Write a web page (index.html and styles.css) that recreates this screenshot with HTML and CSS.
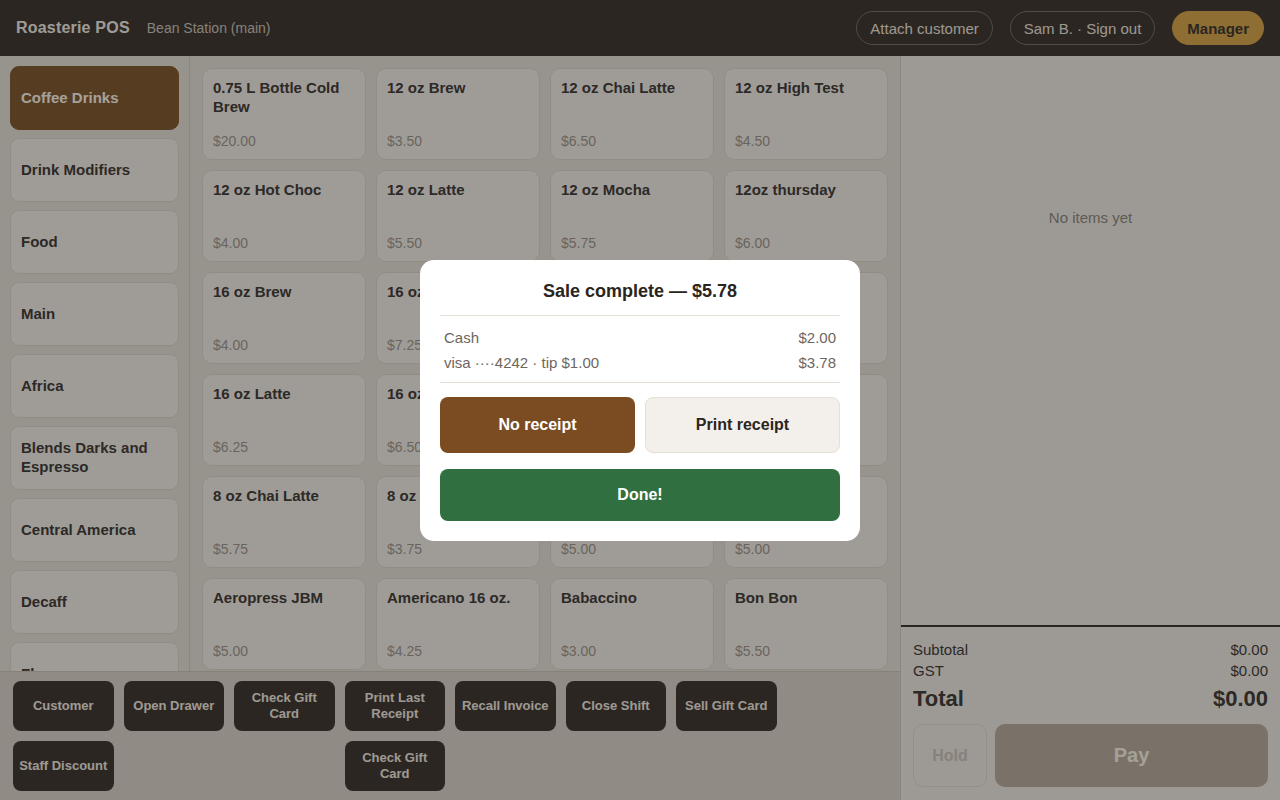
FILE: index.html
```html
<!DOCTYPE html>
<html lang="en">
<head>
<meta charset="utf-8">
<title>Roasterie POS</title>
<link rel="stylesheet" href="styles.css">
</head>
<body>
<div class="app">
  <header class="topbar">
    <div class="brand">
      <span class="brand-name">Roasterie POS</span>
      <span class="store">Bean Station (main)</span>
    </div>
    <div class="top-actions">
      <button class="pill">Attach customer</button>
      <button class="pill">Sam B. · Sign out</button>
      <button class="pill pill-gold">Manager</button>
    </div>
  </header>

  <div class="main">
    <div class="left">
      <div class="catalog">
        <nav class="categories">
          <button class="cat active">Coffee Drinks</button>
          <button class="cat">Drink Modifiers</button>
          <button class="cat">Food</button>
          <button class="cat">Main</button>
          <button class="cat">Africa</button>
          <button class="cat">Blends Darks and Espresso</button>
          <button class="cat">Central America</button>
          <button class="cat">Decaff</button>
          <button class="cat">Flavours</button>
          <button class="cat">Retail</button>
        </nav>
        <div class="products">
          <div class="tile"><span class="name">0.75 L Bottle Cold Brew</span><span class="price">$20.00</span></div>
          <div class="tile"><span class="name">12 oz Brew</span><span class="price">$3.50</span></div>
          <div class="tile"><span class="name">12 oz Chai Latte</span><span class="price">$6.50</span></div>
          <div class="tile"><span class="name">12 oz High Test</span><span class="price">$4.50</span></div>

          <div class="tile"><span class="name">12 oz Hot Choc</span><span class="price">$4.00</span></div>
          <div class="tile"><span class="name">12 oz Latte</span><span class="price">$5.50</span></div>
          <div class="tile"><span class="name">12 oz Mocha</span><span class="price">$5.75</span></div>
          <div class="tile"><span class="name">12oz thursday</span><span class="price">$6.00</span></div>

          <div class="tile"><span class="name">16 oz Brew</span><span class="price">$4.00</span></div>
          <div class="tile"><span class="name">16 oz Chai Latte</span><span class="price">$7.25</span></div>
          <div class="tile"><span class="name">16 oz High Test</span><span class="price">$5.00</span></div>
          <div class="tile"><span class="name">16 oz Hot Choc</span><span class="price">$4.75</span></div>

          <div class="tile"><span class="name">16 oz Latte</span><span class="price">$6.25</span></div>
          <div class="tile"><span class="name">16 oz Mocha</span><span class="price">$6.50</span></div>
          <div class="tile"><span class="name">20 oz Brew</span><span class="price">$4.50</span></div>
          <div class="tile"><span class="name">8 oz Brew</span><span class="price">$3.00</span></div>

          <div class="tile"><span class="name">8 oz Chai Latte</span><span class="price">$5.75</span></div>
          <div class="tile"><span class="name">8 oz Hot Choc</span><span class="price">$3.75</span></div>
          <div class="tile"><span class="name">8 oz Latte</span><span class="price">$5.00</span></div>
          <div class="tile"><span class="name">8 oz Mocha</span><span class="price">$5.00</span></div>

          <div class="tile"><span class="name">Aeropress JBM</span><span class="price">$5.00</span></div>
          <div class="tile"><span class="name">Americano 16 oz.</span><span class="price">$4.25</span></div>
          <div class="tile"><span class="name">Babaccino</span><span class="price">$3.00</span></div>
          <div class="tile"><span class="name">Bon Bon</span><span class="price">$5.50</span></div>
        </div>
      </div>

      <div class="actions">
        <button class="act">Customer</button>
        <button class="act">Open Drawer</button>
        <button class="act">Check Gift Card</button>
        <button class="act">Print Last Receipt</button>
        <button class="act">Recall Invoice</button>
        <button class="act">Close Shift</button>
        <button class="act">Sell Gift Card</button>
        <button class="act row2 col1">Staff Discount</button>
        <button class="act row2 col4">Check Gift Card</button>
      </div>
    </div>

    <aside class="cart">
      <div class="cart-items">
        <p class="empty">No items yet</p>
      </div>
      <div class="summary">
        <div class="sum-row"><span>Subtotal</span><span>$0.00</span></div>
        <div class="sum-row"><span>GST</span><span>$0.00</span></div>
        <div class="sum-row total"><span>Total</span><span>$0.00</span></div>
        <div class="pay-row">
          <button class="hold">Hold</button>
          <button class="pay">Pay</button>
        </div>
      </div>
    </aside>
  </div>
</div>

<div class="overlay">
  <div class="modal">
    <h2 class="modal-title">Sale complete — $5.78</h2>
    <div class="tenders">
      <div class="tender"><span>Cash</span><span>$2.00</span></div>
      <div class="tender"><span>visa ····4242 · tip $1.00</span><span>$3.78</span></div>
    </div>
    <div class="receipt-row">
      <button class="mbtn no-receipt">No receipt</button>
      <button class="mbtn print-receipt">Print receipt</button>
    </div>
    <button class="mbtn done">Done!</button>
  </div>
</div>
</body>
</html>
```

FILE: styles.css
```css
* { box-sizing: border-box; }

html, body {
  margin: 0;
  padding: 0;
  width: 1280px;
  height: 800px;
  overflow: hidden;
  font-family: "Liberation Sans", Arial, sans-serif;
}

button {
  font-family: inherit;
  cursor: pointer;
}

.app {
  width: 1280px;
  height: 800px;
  display: flex;
  flex-direction: column;
  background: #e9e3db;
}

/* ---------- Top bar ---------- */
.topbar {
  height: 56px;
  flex: none;
  background: #433b34;
  display: flex;
  align-items: center;
  justify-content: space-between;
  padding: 0 16px;
}

.brand {
  display: flex;
  align-items: center;
  gap: 17px;
}

.brand-name {
  font-weight: 700;
  font-size: 16px;
  letter-spacing: 0.2px;
  color: #f6efe6;
}

.store {
  font-size: 14px;
  color: #cfc7bd;
}

.top-actions {
  display: flex;
  align-items: center;
  gap: 17px;
}

.pill {
  height: 34px;
  padding: 0 13px;
  border: 1px solid #7d746a;
  border-radius: 17px;
  background: transparent;
  color: #f0e8de;
  font-size: 15px;
  line-height: 17px;
}

.pill-gold {
  background: #dba94e;
  border-color: #dba94e;
  color: #433b34;
  font-weight: 700;
  padding: 0 14px;
}

/* ---------- Main ---------- */
.main {
  flex: 1;
  min-height: 0;
  display: flex;
}

.left {
  flex: 1;
  min-width: 0;
  display: flex;
  flex-direction: column;
}

.catalog {
  flex: 1;
  min-height: 0;
  display: flex;
  overflow: hidden;
}

.categories {
  width: 190px;
  flex: none;
  border-right: 1px solid #d6cec3;
  padding: 10px;
  display: flex;
  flex-direction: column;
  gap: 8px;
  overflow: hidden;
}

.cat {
  flex: none;
  height: 64px;
  border: 1px solid #e0d7cb;
  border-radius: 9px;
  background: #f4f0ea;
  color: #46403a;
  font-size: 15px;
  font-weight: 700;
  line-height: 19px;
  text-align: left;
  padding: 0 10px 2px;
}

.cat.active {
  background: #845c32;
  border-color: #845c32;
  color: #fff8ef;
}

.products {
  flex: 1;
  min-width: 0;
  padding: 12px;
  display: grid;
  grid-template-columns: repeat(4, 1fr);
  grid-auto-rows: 92px;
  gap: 10px;
  overflow: hidden;
  align-content: start;
}

.tile {
  background: #f4f0ea;
  border: 1px solid #e0d7cb;
  border-radius: 10px;
  padding: 9px 10px 9px;
  display: flex;
  flex-direction: column;
  justify-content: space-between;
}

.tile .name {
  font-weight: 700;
  font-size: 15px;
  line-height: 19px;
  color: #46403a;
}

.tile .price {
  font-size: 14px;
  line-height: 18px;
  color: #a39a8f;
}

/* ---------- Action bar ---------- */
.actions {
  height: 129px;
  flex: none;
  border-top: 1px solid #cfc6ba;
  background: #ddd6cc;
  padding: 9px 13px;
  display: grid;
  grid-template-columns: repeat(8, 1fr);
  grid-template-rows: 50px 50px;
  gap: 10px;
}

.act {
  border: none;
  border-radius: 8px;
  background: #433b34;
  color: #f3ebe1;
  font-weight: 700;
  font-size: 13px;
  line-height: 16px;
  padding: 0 3px;
  text-align: center;
}

.row2 { grid-row: 2; }
.col1 { grid-column: 1; }
.col4 { grid-column: 4; }

/* ---------- Cart ---------- */
.cart {
  width: 380px;
  flex: none;
  border-left: 1px solid #d6cec3;
  background: #f1ede6;
  display: flex;
  flex-direction: column;
}

.cart-items {
  flex: 1;
  min-height: 0;
}

.empty {
  margin: 0;
  padding-top: 152px;
  text-align: center;
  font-size: 15px;
  line-height: 20px;
  color: #938b82;
}

.summary {
  border-top: 2px solid #433b34;
  padding: 12px 12px 13px;
}

.sum-row {
  display: flex;
  justify-content: space-between;
  font-size: 15px;
  line-height: 21px;
  color: #46403a;
}

.sum-row.total {
  margin-top: 4px;
  font-size: 22px;
  line-height: 28px;
  font-weight: 700;
}

.pay-row {
  margin-top: 11px;
  display: flex;
  gap: 8px;
  height: 63px;
}

.hold {
  width: 74px;
  flex: none;
  border: 1px solid #e2dad0;
  border-radius: 10px;
  background: #f1ede6;
  color: #cdc6bd;
  font-size: 16px;
  font-weight: 700;
}

.pay {
  flex: 1;
  border: none;
  border-radius: 10px;
  background: #bcaea0;
  color: #fdf6ec;
  font-size: 20px;
  font-weight: 700;
}

/* ---------- Modal ---------- */
.overlay {
  position: fixed;
  inset: 0;
  background: rgba(0, 0, 0, 0.35);
  display: flex;
  align-items: center;
  justify-content: center;
}

.modal {
  width: 440px;
  background: #ffffff;
  border-radius: 14px;
  padding: 20px;
}

.modal-title {
  margin: 0;
  padding-bottom: 13px;
  border-bottom: 1px solid #e6dfd5;
  text-align: center;
  font-size: 18px;
  line-height: 22px;
  font-weight: 700;
  color: #2b2520;
}

.tenders {
  padding: 9px 4px 7px;
  border-bottom: 1px solid #e6dfd5;
}

.tender {
  display: flex;
  justify-content: space-between;
  font-size: 15px;
  line-height: 25px;
  color: #6e665e;
}

.receipt-row {
  margin-top: 14px;
  display: grid;
  grid-template-columns: 1fr 1fr;
  gap: 10px;
}

.mbtn {
  height: 56px;
  border-radius: 8px;
  font-size: 16px;
  font-weight: 700;
}

.no-receipt {
  border: none;
  background: #7b4c22;
  color: #ffffff;
}

.print-receipt {
  border: 1px solid #e6dfd5;
  background: #f3f0eb;
  color: #2b2520;
}

.done {
  display: block;
  width: 100%;
  height: 52px;
  margin-top: 16px;
  border: none;
  background: #2f6f40;
  color: #ffffff;
}
```
